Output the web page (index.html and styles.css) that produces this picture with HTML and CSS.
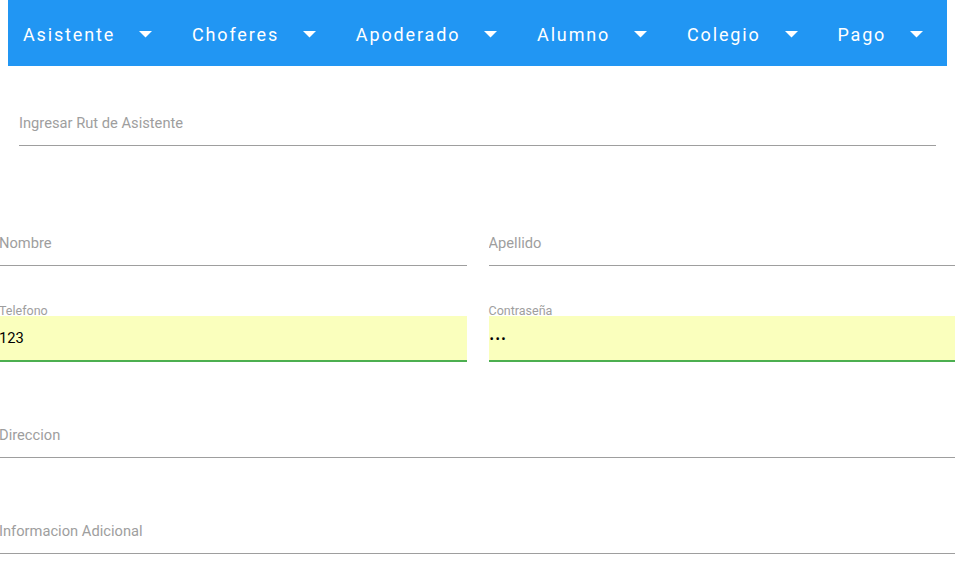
FILE: index.html
```html
<!DOCTYPE html>
<html lang="es">
<head>
<meta charset="utf-8">
<title>Asistente</title>
<link rel="stylesheet" href="styles.css">
</head>
<body>
<nav class="topbar">
  <a class="menu-item">Asistente <svg class="caret" viewBox="0 0 12 6"><path d="M0 0h12L6 6z"/></svg></a>
  <a class="menu-item">Choferes <svg class="caret" viewBox="0 0 12 6"><path d="M0 0h12L6 6z"/></svg></a>
  <a class="menu-item">Apoderado <svg class="caret" viewBox="0 0 12 6"><path d="M0 0h12L6 6z"/></svg></a>
  <a class="menu-item">Alumno <svg class="caret" viewBox="0 0 12 6"><path d="M0 0h12L6 6z"/></svg></a>
  <a class="menu-item">Colegio <svg class="caret" viewBox="0 0 12 6"><path d="M0 0h12L6 6z"/></svg></a>
  <a class="menu-item">Pago <svg class="caret" viewBox="0 0 12 6"><path d="M0 0h12L6 6z"/></svg></a>
</nav>

<main class="form">
  <div class="search">
    <input class="field" type="text" placeholder="Ingresar Rut de Asistente">
  </div>

  <div class="row row-names">
    <div class="col"><input class="field" type="text" placeholder="Nombre"></div>
    <div class="col"><input class="field" type="text" placeholder="Apellido"></div>
  </div>

  <div class="row row-filled">
    <div class="col">
      <label class="float-label">Telefono</label>
      <input class="field filled" type="text" value="123">
    </div>
    <div class="col">
      <label class="float-label">Contraseña</label>
      <input class="field filled pass" type="password" value="123">
    </div>
  </div>

  <div class="row row-dir">
    <input class="field" type="text" placeholder="Direccion">
  </div>

  <div class="row row-info">
    <input class="field" type="text" placeholder="Informacion Adicional">
  </div>
</main>
</body>
</html>
```

FILE: styles.css
```css
html, body {
  margin: 0;
  padding: 0;
  overflow: hidden;
  background: #ffffff;
  font-family: Roboto, "Noto Sans", Arial, sans-serif;
}

.topbar {
  margin-left: 8px;
  width: 939px;
  height: 66px;
  background: #2196f3;
  display: flex;
  align-items: center;
  padding-left: 15px;
  box-sizing: border-box;
  gap: 39.8px;
}

.menu-item {
  display: flex;
  align-items: center;
  gap: 24px;
  color: #ffffff;
  font-size: 18px;
  font-weight: 400;
  letter-spacing: 1.85px;
  text-decoration: none;
  padding-top: 2px;
}

.caret {
  width: 13px;
  height: 6.5px;
  fill: #ffffff;
  margin-top: 1px;
}

.form {
  margin-left: -1px;
  width: 957px;
}

.field {
  display: block;
  width: 100%;
  height: 45px;
  box-sizing: border-box;
  margin: 0;
  padding: 0;
  border: none;
  border-bottom: 1px solid #9e9e9e;
  border-radius: 0;
  outline: none;
  background: transparent;
  font-family: Roboto, "Noto Sans", Arial, sans-serif;
  font-size: 14.7px;
  color: #000000;
}

.field::placeholder {
  color: #9e9e9e;
  opacity: 1;
}

.search {
  margin: 35px 20px 0 20px;
}

.row {
  display: flex;
  gap: 22px;
}

.col {
  flex: 1;
  position: relative;
}

.row-names { margin-top: 75px; }
.row-filled { margin-top: 50px; }
.row-dir { margin-top: 52px; }
.row-info { margin-top: 51px; }

.field.filled {
  background: #faffbd;
  border-bottom: 1px solid #4caf50;
  box-shadow: 0 1px 0 0 #4caf50;
}

.field.pass {
  font-size: 13px;
  letter-spacing: 1.5px;
  padding-left: 1px;
}

.float-label {
  position: absolute;
  left: 0;
  top: -11px;
  font-size: 12.5px;
  line-height: 12px;
  color: #9e9e9e;
}
```
